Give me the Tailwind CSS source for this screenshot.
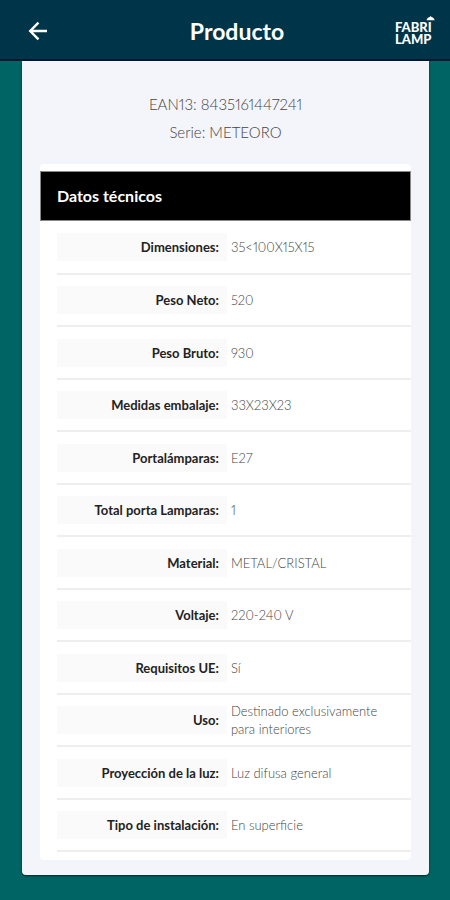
<!DOCTYPE html>
<html lang="es">
<head>
<meta charset="utf-8">
<meta name="viewport" content="width=device-width, initial-scale=1">
<title>Producto</title>
<script src="https://cdn.jsdelivr.net/npm/@tailwindcss/browser@4"></script>
</head>
<body class="min-h-screen bg-[#006464] font-[Lato,sans-serif] text-[#444] proportional-nums">
<header class="grid h-[61px] grid-cols-[1fr_auto_1fr] items-center border-b-2 border-[#001932] bg-[#003549] pt-[3px] pr-3 pl-6 text-white">
  <button type="button" aria-label="Volver" class="flex size-7 items-center justify-center">
    <svg viewBox="0 0 20 20" class="size-5" fill="none" stroke="currentColor" stroke-width="2.4"><path d="M19 10H2.500M10.500 1.700 2.200 10l8.300 8.300"/></svg>
  </button>
  <h1 class="pl-3 text-[23px] leading-7 font-bold">Producto</h1>
  <a href="#" aria-label="Fabrilamp" class="justify-self-end">
    <svg viewBox="0 0 44 32" class="h-8 w-11" fill="currentColor" font-family="Lato, sans-serif" font-size="13" font-weight="900">
      <text x="1" y="17">FABRI<tspan x="1" y="29">LAMP</tspan></text>
      <path d="M32.500 5.200C32.900 3.200 34.400 2.200 36 2V1.200h1.200V2c1.600.2 3.100 1.200 3.500 3.200Z"/>
    </svg>
  </a>
</header>
<main class="pr-[21px] pb-6 pl-[22px]">
  <article class="rounded-b-sm bg-[#f4f5fa] px-[18px] pb-[15px] shadow-[0_1px_2px_#00000099]">
    <div class="pt-[29px] pb-[18px] text-center text-[15px] leading-7 font-light">
      <p>EAN13: 8435161447241</p>
      <p>Serie: METEORO</p>
    </div>
    <section class="rounded-sm bg-white pt-[7px] pb-[8px]">
      <h2 class="border border-[#888] bg-black px-4 py-3 text-base leading-6 font-bold text-white">Datos técnicos</h2>
      <div class="pl-[17px]">
        <table class="w-full table-fixed border-collapse text-[13px] leading-[18px]">
          <colgroup><col class="w-[48%]"><col></colgroup>
          <tbody class="[&_td]:py-0 [&_td]:pr-7 [&_td]:pl-1 [&_td]:font-light [&_th]:p-0 [&_th]:text-right [&_th]:text-[#222] [&_th_span]:block [&_th_span]:bg-[#fafafa] [&_th_span]:py-[5px] [&_th_span]:pr-2 [&_tr]:h-[53px] [&_tr]:border-b-2 [&_tr]:border-[#eee] [&_tr:nth-child(even)]:h-[52px]">
            <tr><th scope="row"><span>Dimensiones:</span></th><td>35&lt;100X15X15</td></tr>
            <tr><th scope="row"><span>Peso Neto:</span></th><td>520</td></tr>
            <tr><th scope="row"><span>Peso Bruto:</span></th><td>930</td></tr>
            <tr><th scope="row"><span>Medidas embalaje:</span></th><td>33X23X23</td></tr>
            <tr><th scope="row"><span>Portalámparas:</span></th><td>E27</td></tr>
            <tr><th scope="row"><span>Total porta Lamparas:</span></th><td>1</td></tr>
            <tr><th scope="row"><span>Material:</span></th><td>METAL/CRISTAL</td></tr>
            <tr><th scope="row"><span>Voltaje:</span></th><td>220-240 V</td></tr>
            <tr><th scope="row"><span>Requisitos UE:</span></th><td>Sí</td></tr>
            <tr><th scope="row"><span>Uso:</span></th><td>Destinado exclusivamente para interiores</td></tr>
            <tr><th scope="row"><span>Proyección de la luz:</span></th><td>Luz difusa general</td></tr>
            <tr><th scope="row"><span>Tipo de instalación:</span></th><td>En superficie</td></tr>
          </tbody>
        </table>
      </div>
    </section>
  </article>
</main>
</body>
</html>
